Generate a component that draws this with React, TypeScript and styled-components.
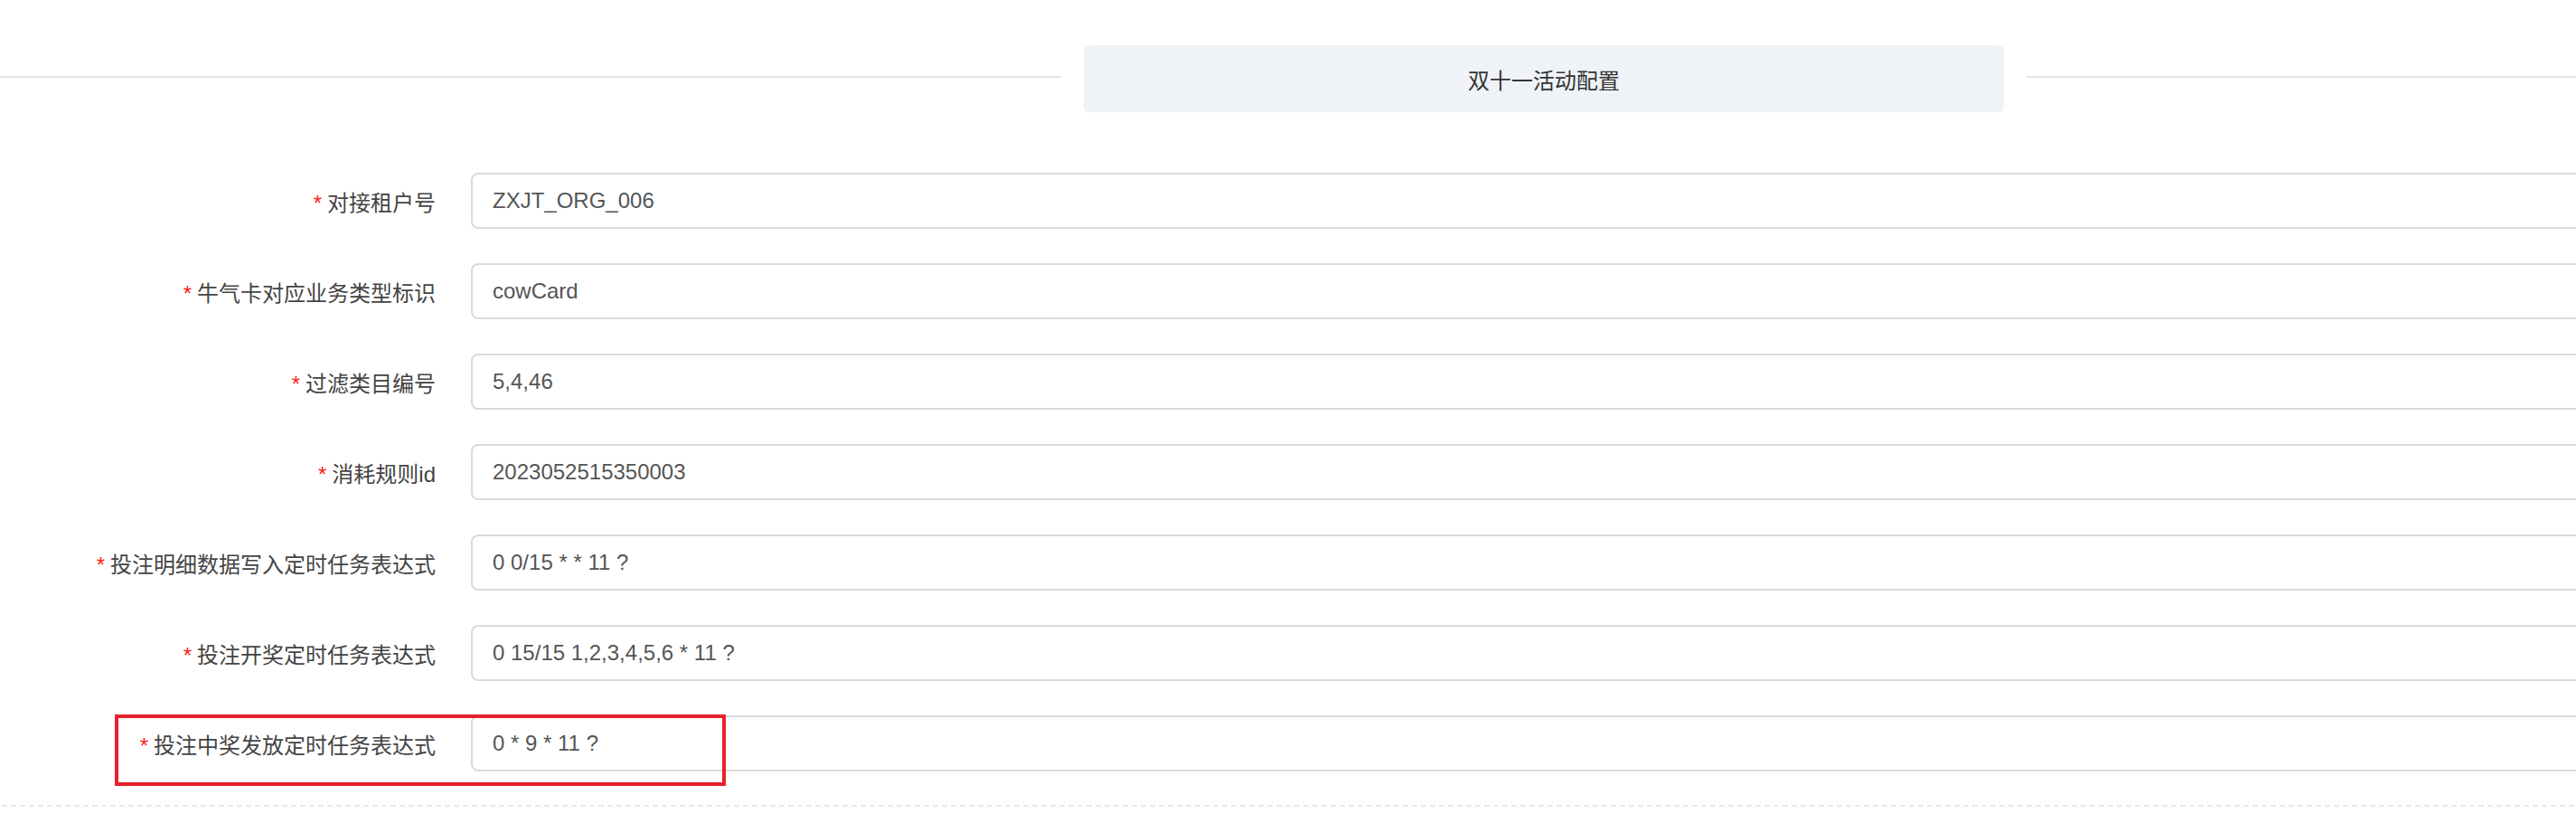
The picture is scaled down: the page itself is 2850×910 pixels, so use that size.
import React from "react";
import styled, { createGlobalStyle } from "styled-components";

const GlobalStyle = createGlobalStyle`
  html, body {
    margin: 0;
    padding: 0;
    background: #ffffff;
  }
  body {
    font-family: "Liberation Sans", "Noto Sans CJK SC", Arial, sans-serif;
    overflow: hidden;
  }
`;

const Page = styled.div`
  width: 2850px;
  height: 910px;
  overflow: hidden;
  padding-top: 50px;
  box-sizing: border-box;
`;

const Header = styled.div`
  display: grid;
  grid-template-columns: 1fr 1018px 608px;
  column-gap: 25px;
  align-items: center;
`;

const HeaderLine = styled.div`
  height: 2px;
  background: #e4e4e4;
  margin-bottom: 4px;
`;

const HeaderBox = styled.div`
  height: 74px;
  border-radius: 6px;
  background: #eff2f7;
  display: flex;
  align-items: center;
  justify-content: center;
  font-size: 24px;
  color: #333333;
`;

const Form = styled.div`
  margin-top: 67px;
  display: flex;
  flex-direction: column;
  gap: 38px;
`;

const Row = styled.div`
  position: relative;
  display: grid;
  grid-template-columns: 482px 1fr;
  column-gap: 39px;
  align-items: center;
  height: 62px;
`;

const Label = styled.label`
  text-align: right;
  font-size: 24px;
  color: #444444;
  white-space: nowrap;
`;

const Star = styled.span`
  color: #ff1a1a;
  margin-right: 6px;
  font-size: 24px;
`;

const Field = styled.input`
  height: 62px;
  width: calc(100% + 40px);
  box-sizing: border-box;
  border: 2px solid #dadada;
  border-radius: 8px;
  padding: 0 22px;
  font-family: "Liberation Sans", "Noto Sans CJK SC", Arial, sans-serif;
  font-size: 24px;
  color: #555555;
  background: #ffffff;
  outline: none;
`;

const Highlight = styled.div`
  position: absolute;
  left: 127px;
  top: -1px;
  width: 676px;
  height: 79px;
  border: 4px solid #e8202a;
  box-sizing: border-box;
  pointer-events: none;
`;

const Divider = styled.div`
  margin-top: 37px;
  height: 2px;
  background-image: repeating-linear-gradient(
    to right,
    transparent 0 2px,
    #e8e8e8 2px 8px,
    transparent 8px 10px
  );
`;

const rows = [
  { label: "对接租户号", value: "ZXJT_ORG_006" },
  { label: "牛气卡对应业务类型标识", value: "cowCard" },
  { label: "过滤类目编号", value: "5,4,46" },
  { label: "消耗规则id", value: "2023052515350003" },
  { label: "投注明细数据写入定时任务表达式", value: "0 0/15 * * 11 ?" },
  { label: "投注开奖定时任务表达式", value: "0 15/15 1,2,3,4,5,6 * 11 ?" },
  { label: "投注中奖发放定时任务表达式", value: "0 * 9 * 11 ?", highlight: true },
];

export default function App() {
  return (
    <>
      <GlobalStyle />
      <Page>
        <Header>
          <HeaderLine />
          <HeaderBox>双十一活动配置</HeaderBox>
          <HeaderLine />
        </Header>
        <Form>
          {rows.map((r) => (
            <Row key={r.label}>
              <Label>
                <Star>*</Star>
                {r.label}
              </Label>
              <Field readOnly value={r.value} />
              {r.highlight && <Highlight />}
            </Row>
          ))}
        </Form>
        <Divider />
      </Page>
    </>
  );
}
